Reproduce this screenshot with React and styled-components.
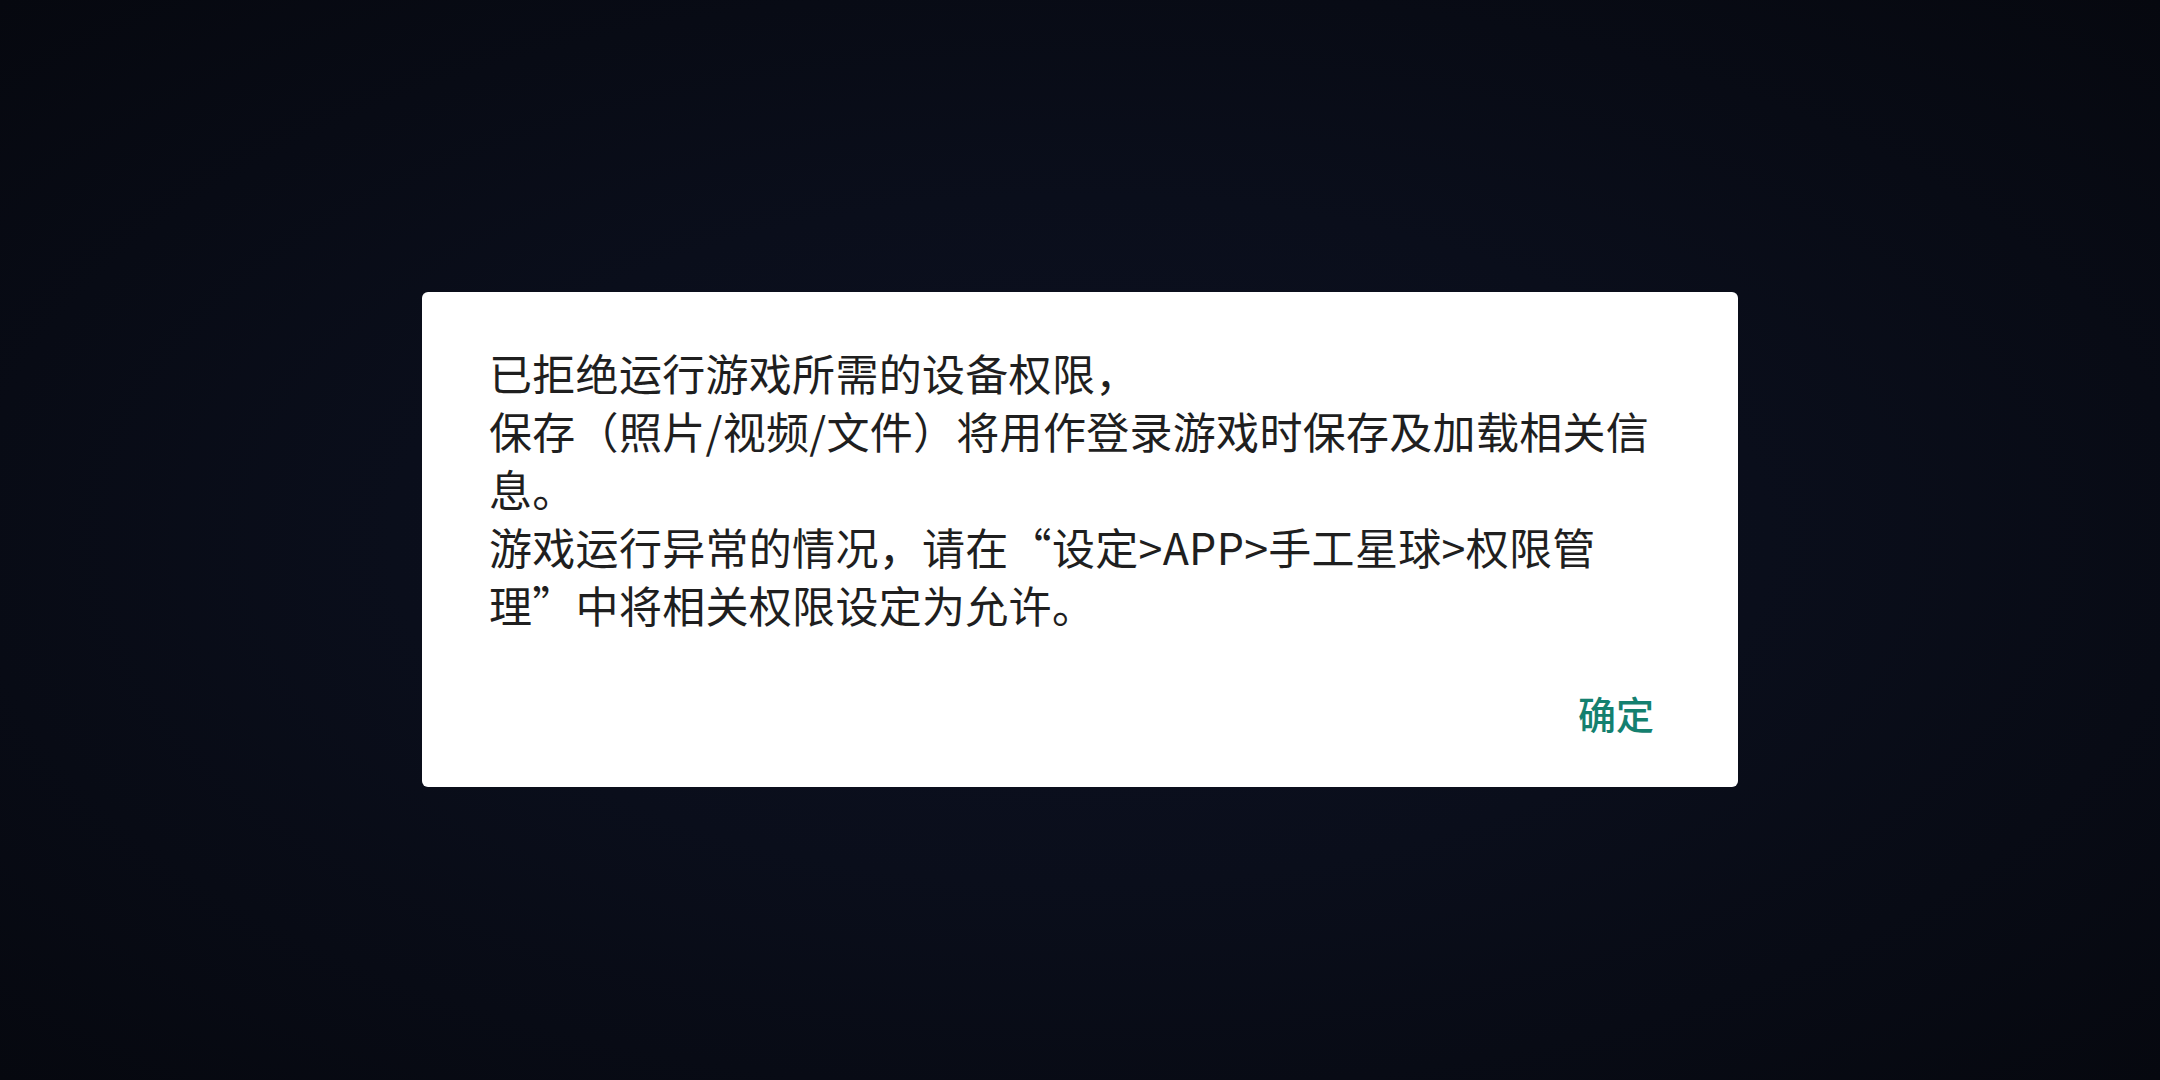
import React from 'react';
import styled, { createGlobalStyle } from 'styled-components';

const GlobalStyle = createGlobalStyle`
  html, body {
    margin: 0;
    padding: 0;
    background: #070a13;
  }
  * {
    box-sizing: border-box;
  }
`;

const messages = [
  '已拒绝运行游戏所需的设备权限，',
  '保存（照片/视频/文件）将用作登录游戏时保存及加载相关信息。',
  '游戏运行异常的情况，请在“设定>APP>手工星球>权限管理”中将相关权限设定为允许。'
];

function App() {
  return (
    <>
      <GlobalStyle />
      <Screen>
        <Dialog>
          <Message>
            {messages.map((line, i) => (
              <Line key={i}>{line}</Line>
            ))}
          </Message>
          <Footer>
            <ConfirmButton type="button">确定</ConfirmButton>
          </Footer>
        </Dialog>
      </Screen>
    </>
  );
}

export default App;

const Screen = styled.div`
  width: 2160px;
  height: 1080px;
  display: flex;
  justify-content: center;
  align-items: center;
  padding-bottom: 1px;
  background: radial-gradient(
    ellipse at 50% 50%,
    #0d1122 0%,
    #0a0e1b 45%,
    #06080f 100%
  );
  font-family: 'Noto Sans CJK SC', 'Noto Sans', sans-serif;
`;

const Dialog = styled.div`
  width: 1316px;
  height: 495px;
  background: #ffffff;
  border-radius: 6px;
  padding: 51px 70px 34px 67px;
  display: flex;
  flex-direction: column;
`;

const Message = styled.div`
  width: 1172px;
  color: #1f1f1f;
  font-size: 43px;
  letter-spacing: 0.3px;
  line-height: 58px;
`;

const Line = styled.p`
  margin: 0;
`;

const Footer = styled.div`
  margin-top: auto;
  display: flex;
  justify-content: flex-end;
`;

const ConfirmButton = styled.button`
  height: 80px;
  padding: 0 14px;
  border: none;
  background: transparent;
  color: #14806f;
  font-family: 'Noto Sans CJK SC', 'Noto Sans', sans-serif;
  font-size: 38px;
  font-weight: 500;
  line-height: 80px;
  cursor: pointer;
`;
